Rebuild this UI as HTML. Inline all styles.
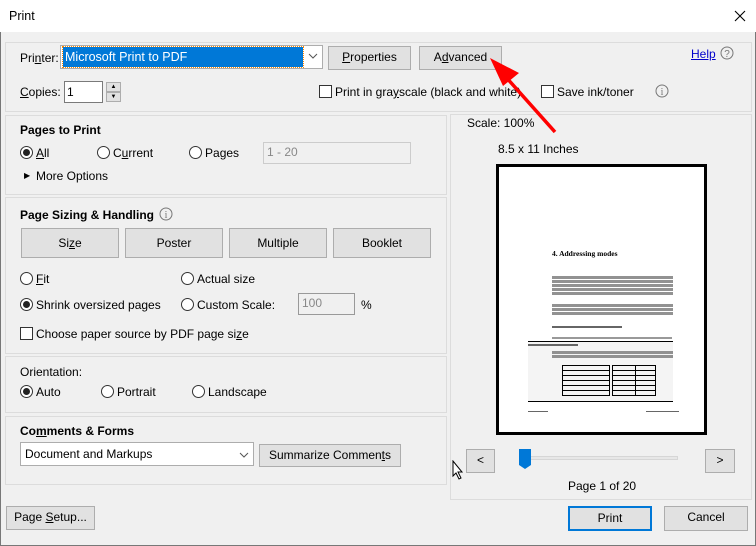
<!DOCTYPE html>
<html><head><meta charset="utf-8"><style>
*{box-sizing:border-box;margin:0;padding:0}
body{width:756px;height:546px;background:#f0f0f0;font-family:"Liberation Sans",sans-serif;font-size:12px;color:#000;position:relative;overflow:hidden}
.a{position:absolute}
.t{position:absolute;white-space:nowrap;line-height:14px}
.g{position:absolute;border:1px solid #dcdcdc}
.btn{position:absolute;background:#e1e1e1;border:1px solid #adadad;text-align:center;line-height:21px;white-space:nowrap}
.rad{position:absolute;width:13px;height:13px;border:1px solid #333;border-radius:50%;background:#fff}
.rad.on::after{content:"";position:absolute;left:2px;top:2px;width:7px;height:7px;border-radius:50%;background:#222}
.cb{position:absolute;width:13px;height:13px;border:1px solid #333;background:#fff}
.inp{position:absolute;background:#fff;border:1px solid #7a7a7a}
.dis{background:#f0f0f0;border:1px solid #ccc;color:#888;padding-left:3px;line-height:19px}
.b{font-weight:bold}
.u{text-decoration:underline}
.tx{position:absolute;background:repeating-linear-gradient(#777 0 3px,transparent 3px 4px);opacity:.8}
.row{position:absolute;border:1px solid #000}
</style></head><body>
<div class="a" style="left:0;top:0;width:756px;height:32px;background:#fff"></div>
<div class="t" style="left:9px;top:9px;font-size:12.5px">Print</div>
<svg class="a" style="left:734px;top:10px" width="12" height="12"><path d="M1 1L11 11M11 1L1 11" stroke="#000" stroke-width="1.1"/></svg>
<div class="a" style="left:0;top:32px;width:1px;height:514px;background:#777"></div>
<div class="a" style="left:755px;top:32px;width:1px;height:514px;background:#777"></div>
<div class="a" style="left:0;top:545px;width:756px;height:1px;background:#777"></div>

<div class="g" style="left:5px;top:42px;width:747px;height:70px"></div>
<div class="t" style="left:20px;top:51px">Pri<span class="u">n</span>ter:</div>
<div class="inp" style="left:60px;top:45px;width:263px;height:24px;border-color:#adadad"></div>
<div class="a" style="left:63px;top:47px;width:240px;height:20px;background:#0078d7;outline:1px dotted #f80"></div>
<div class="t" style="left:65px;top:50px;color:#fff;font-size:12.5px">Microsoft Print to PDF</div>
<svg class="a" style="left:308px;top:53px" width="10" height="6"><path d="M1 1L5 5L9 1" stroke="#555" fill="none"/></svg>
<div class="btn" style="left:328px;top:46px;width:83px;height:24px"><span class="u">P</span>roperties</div>
<div class="btn" style="left:419px;top:46px;width:83px;height:24px">A<span class="u">d</span>vanced</div>
<div class="t u" style="left:691px;top:47px;color:#00c">Help</div>
<svg class="a" style="left:720px;top:46px" width="14" height="14"><circle cx="7" cy="7" r="6" fill="none" stroke="#777"/><text x="7" y="11" font-size="10" text-anchor="middle" fill="#777" font-family="Liberation Sans">?</text></svg>
<div class="t" style="left:20px;top:85px"><span class="u">C</span>opies:</div>
<div class="inp" style="left:64px;top:81px;width:39px;height:22px"></div>
<div class="t" style="left:67px;top:85px">1</div>
<div class="btn" style="left:106px;top:82px;width:15px;height:10px;line-height:8px;font-size:6px">▲</div>
<div class="btn" style="left:106px;top:92px;width:15px;height:10px;line-height:8px;font-size:6px">▼</div>
<div class="cb" style="left:319px;top:85px"></div>
<div class="t" style="left:335px;top:85px">Print in gra<span class="u">y</span>scale (black and white)</div>
<div class="cb" style="left:541px;top:85px"></div>
<div class="t" style="left:557px;top:85px">Save ink/toner</div>
<svg class="a" style="left:655px;top:84px" width="14" height="14"><circle cx="7" cy="7" r="6" fill="none" stroke="#777"/><text x="7" y="11" font-size="10" text-anchor="middle" fill="#777" font-family="Liberation Serif">i</text></svg>

<div class="g" style="left:5px;top:115px;width:442px;height:80px"></div>
<div class="t b" style="left:20px;top:123px">Pages to Print</div>
<div class="rad on" style="left:20px;top:146px"></div><div class="t" style="left:36px;top:146px"><span class="u">A</span>ll</div>
<div class="rad" style="left:97px;top:146px"></div><div class="t" style="left:113px;top:146px">C<span class="u">u</span>rrent</div>
<div class="rad" style="left:189px;top:146px"></div><div class="t" style="left:205px;top:146px">Pa<span class="u">g</span>es</div>
<div class="a dis" style="left:263px;top:142px;width:148px;height:22px">1 - 20</div>
<div class="t" style="left:24px;top:169px;font-size:8px">▶</div>
<div class="t" style="left:36px;top:169px">More Options</div>

<div class="g" style="left:5px;top:197px;width:442px;height:157px"></div>
<div class="t b" style="left:20px;top:208px">Page Sizing &amp; Handling</div>
<svg class="a" style="left:152px;top:207px;left:159px" width="14" height="14"><circle cx="7" cy="7" r="6" fill="none" stroke="#777"/><text x="7" y="11" font-size="10" text-anchor="middle" fill="#777" font-family="Liberation Serif">i</text></svg>
<div class="btn" style="left:21px;top:228px;width:98px;height:30px;line-height:28px">Si<span class="u">z</span>e</div>
<div class="btn" style="left:125px;top:228px;width:98px;height:30px;line-height:28px">Poster</div>
<div class="btn" style="left:229px;top:228px;width:98px;height:30px;line-height:28px">Multiple</div>
<div class="btn" style="left:333px;top:228px;width:98px;height:30px;line-height:28px">Booklet</div>
<div class="rad" style="left:20px;top:272px"></div><div class="t" style="left:36px;top:272px"><span class="u">F</span>it</div>
<div class="rad" style="left:181px;top:272px"></div><div class="t" style="left:197px;top:272px">Actual size</div>
<div class="rad on" style="left:20px;top:298px"></div><div class="t" style="left:36px;top:298px">Shrink oversized pages</div>
<div class="rad" style="left:181px;top:298px"></div><div class="t" style="left:197px;top:298px">Custom Scale:</div>
<div class="a dis" style="left:298px;top:293px;width:57px;height:22px;border-color:#999">100</div>
<div class="t" style="left:361px;top:298px">%</div>
<div class="cb" style="left:20px;top:327px"></div><div class="t" style="left:36px;top:327px">Choose paper source by PDF page si<span class="u">z</span>e</div>

<div class="g" style="left:5px;top:356px;width:442px;height:57px"></div>
<div class="t" style="left:20px;top:365px">Orientation:</div>
<div class="rad on" style="left:20px;top:385px"></div><div class="t" style="left:36px;top:385px">Auto</div>
<div class="rad" style="left:101px;top:385px"></div><div class="t" style="left:117px;top:385px">Portrait</div>
<div class="rad" style="left:192px;top:385px"></div><div class="t" style="left:208px;top:385px">Landscape</div>

<div class="g" style="left:5px;top:416px;width:442px;height:69px"></div>
<div class="t b" style="left:20px;top:424px">Co<span class="u">m</span>ments &amp; Forms</div>
<div class="inp" style="left:20px;top:442px;width:234px;height:24px;border-color:#adadad"></div>
<div class="t" style="left:25px;top:447px">Document and Markups</div>
<svg class="a" style="left:239px;top:452px" width="10" height="6"><path d="M1 1L5 5L9 1" stroke="#555" fill="none"/></svg>
<div class="btn" style="left:259px;top:444px;width:142px;height:23px">Summarize Commen<span class="u">t</span>s</div>

<div class="btn" style="left:6px;top:506px;width:89px;height:24px">Page <span class="u">S</span>etup...</div>

<div class="g" style="left:450px;top:114px;width:302px;height:386px"></div>
<div class="t" style="left:467px;top:116px">Scale: 100%</div>
<div class="t" style="left:498px;top:142px">8.5 x 11 Inches</div>
<div class="a" style="left:496px;top:164px;width:211px;height:271px;background:#fff;border:3px solid #000"></div>
<div class="t b" style="left:552px;top:247px;font-size:7.5px;font-family:'Liberation Serif',serif">4. Addressing modes</div>
<div class="tx" style="left:552px;top:276px;width:121px;height:20px"></div>
<div class="tx" style="left:552px;top:304px;width:121px;height:12px"></div>
<div class="a" style="left:552px;top:326px;width:70px;height:2px;background:#666"></div>
<div class="a" style="left:552px;top:337px;width:120px;height:2px;background:#999"></div>
<div class="a" style="left:528px;top:341px;width:145px;height:61px;background:#f4f4f4;border-top:1px solid #000;border-bottom:1px solid #000"></div>
<div class="a" style="left:528px;top:344px;width:50px;height:2px;background:#666"></div>
<div class="tx" style="left:552px;top:351px;width:121px;height:8px"></div>
<div class="row" style="left:562px;top:365px;width:48px;height:31px;background:repeating-linear-gradient(transparent 0 4px,#000 4px 5px)"></div>
<div class="row" style="left:612px;top:365px;width:44px;height:31px;background:repeating-linear-gradient(transparent 0 4px,#000 4px 5px)"></div>
<div class="a" style="left:635px;top:365px;width:1px;height:31px;background:#000"></div>
<div class="a" style="left:528px;top:411px;width:20px;height:1px;background:#666"></div>
<div class="a" style="left:646px;top:411px;width:33px;height:1px;background:#666"></div>

<div class="btn" style="left:466px;top:449px;width:29px;height:24px">&lt;</div>
<div class="btn" style="left:705px;top:449px;width:30px;height:24px">&gt;</div>
<div class="a" style="left:520px;top:456px;width:158px;height:4px;background:#e7e7e7;border:1px solid #d6d6d6"></div>
<svg class="a" style="left:519px;top:449px" width="12" height="20"><path d="M0 0H12V16L6 20L0 16Z" fill="#0078d7"/></svg>
<svg class="a" style="left:452px;top:460px" width="12" height="20"><path d="M1 1V16L4 13L7 19L9 18L6 12H10Z" fill="#fff" stroke="#000"/></svg>
<div class="t" style="left:568px;top:479px">Page 1 of 20</div>

<div class="btn" style="left:568px;top:506px;width:84px;height:25px;border:2px solid #0078d7">Print</div>
<div class="btn" style="left:664px;top:506px;width:84px;height:25px">Cancel</div>

<svg class="a" style="left:0;top:0" width="756" height="546"><line x1="555" y1="132" x2="505" y2="76" stroke="#f00" stroke-width="3.5"/><polygon points="490,58 519,73 503,86" fill="#f00"/></svg>
</body></html>
